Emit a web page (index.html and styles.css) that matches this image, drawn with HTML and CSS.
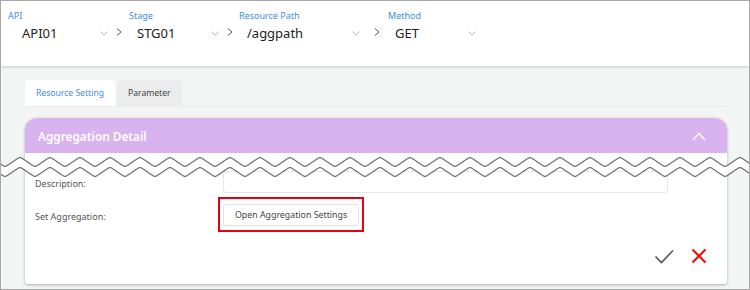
FILE: index.html
```html
<!DOCTYPE html>
<html lang="en">
<head>
<meta charset="utf-8">
<title>Aggregation Detail</title>
<link rel="stylesheet" href="styles.css">
</head>
<body>
<div class="frame">
  <header class="topbar">
    <div class="sel sel-api">
      <span class="sel-label">API</span>
      <div class="sel-row"><span class="sel-value">API01</span><svg class="caret" viewBox="0 0 8 5" width="8" height="5"><path d="M0.5 0.5 L4 4.2 L7.5 0.5"/></svg></div>
    </div>
    <svg class="sep sep-1" viewBox="0 0 6 8" width="6" height="8"><path d="M0.8 0.5 L5 4 L0.8 7.5"/></svg>
    <div class="sel sel-stage">
      <span class="sel-label">Stage</span>
      <div class="sel-row"><span class="sel-value">STG01</span><svg class="caret" viewBox="0 0 8 5" width="8" height="5"><path d="M0.5 0.5 L4 4.2 L7.5 0.5"/></svg></div>
    </div>
    <svg class="sep sep-2" viewBox="0 0 6 8" width="6" height="8"><path d="M0.8 0.5 L5 4 L0.8 7.5"/></svg>
    <div class="sel sel-path">
      <span class="sel-label">Resource Path</span>
      <div class="sel-row"><span class="sel-value">/aggpath</span><svg class="caret" viewBox="0 0 8 5" width="8" height="5"><path d="M0.5 0.5 L4 4.2 L7.5 0.5"/></svg></div>
    </div>
    <svg class="sep sep-3" viewBox="0 0 6 8" width="6" height="8"><path d="M0.8 0.5 L5 4 L0.8 7.5"/></svg>
    <div class="sel sel-method">
      <span class="sel-label">Method</span>
      <div class="sel-row"><span class="sel-value">GET</span><svg class="caret" viewBox="0 0 8 5" width="8" height="5"><path d="M0.5 0.5 L4 4.2 L7.5 0.5"/></svg></div>
    </div>
  </header>

  <main class="content">
    <nav class="tabs">
      <div class="tab tab-active">Resource Setting</div>
      <div class="tab">Parameter</div>
    </nav>

    <section class="card">
      <div class="card-head">
        <h2 class="card-title">Aggregation Detail</h2>
        <svg class="collapse" viewBox="0 0 14 9" width="14" height="9"><path d="M1 8 L7 1.5 L13 8"/></svg>
      </div>
      <div class="card-body">
        <div class="form">
          <span class="form-label">Description:</span>
          <div class="input"></div>
          <span class="form-label">Set Aggregation:</span>
          <div class="form-field">
            <span class="btn-wrap"><button class="btn" type="button">Open Aggregation Settings</button></span>
          </div>
        </div>
        <div class="actions">
          <svg class="icon-ok" viewBox="0 0 20 16" width="20" height="16"><path d="M1.5 8.5 L7.5 14.5 L19 2.5"/></svg>
          <svg class="icon-cancel" viewBox="0 0 16 16" width="16" height="16"><path d="M1.5 1.5 L14.5 14.5 M14.5 1.5 L1.5 14.5"/></svg>
        </div>
      </div>
    </section>
  </main>

  <svg class="tear" width="750" height="30" viewBox="0 0 750 30">
    <defs>
      <pattern id="zz" x="12.5" y="0" width="30" height="30" patternUnits="userSpaceOnUse">
        <path d="M0,11 L5.3,7.4 Q7.5,5.6 9.7,7.4 L20.3,14.6 Q22.5,16.4 24.7,14.6 L30,11 L30,21 L24.7,24.6 Q22.5,26.4 20.3,24.6 L9.7,17.4 Q7.5,15.6 5.3,17.4 L0,21 Z" fill="#fff"/>
        <path d="M-0.2,11.14 L5.3,7.4 Q7.5,5.6 9.7,7.4 L20.3,14.6 Q22.5,16.4 24.7,14.6 L30.2,10.86" fill="none" stroke="#2a2a2a" stroke-width="1"/>
        <path d="M-0.2,21.14 L5.3,17.4 Q7.5,15.6 9.7,17.4 L20.3,24.6 Q22.5,26.4 24.7,24.6 L30.2,20.86" fill="none" stroke="#2a2a2a" stroke-width="1"/>
      </pattern>
    </defs>
    <rect x="0" y="0" width="750" height="30" fill="url(#zz)"/>
  </svg>
</div>
</body>
</html>
```

FILE: styles.css
```css
* { box-sizing: border-box; }

html, body {
  margin: 0;
  padding: 0;
}

body {
  width: 750px;
  height: 290px;
  overflow: hidden;
  font-family: "Noto Sans", "Open Sans", sans-serif;
  color: #333;
}

.frame {
  position: relative;
  width: 750px;
  height: 290px;
  border: 1px solid #a8a8a8;
  background: #f3f4f4;
  overflow: hidden;
}

/* ---------- top bar ---------- */
.topbar {
  display: flex;
  align-items: flex-start;
  height: 65px;
  padding: 9px 0 0 7px;
  background: #fff;
  box-shadow: 0 1px 3px rgba(0, 0, 0, 0.18);
  position: relative;
  z-index: 1;
}

.sel {
  display: flex;
  flex-direction: column;
}

.sel-label {
  font-size: 9px;
  line-height: 12px;
  color: #3a8ee6;
}

.sel-row {
  display: flex;
  align-items: center;
  justify-content: space-between;
  height: 18px;
  margin-top: 2px;
}

.sel-value {
  font-size: 13px;
  line-height: 18px;
  color: #222;
}

.caret {
  fill: none;
  stroke: #b4b4b4;
  stroke-width: 1;
  margin-top: 1px;
}

.sel-api { width: 100px; }
.sel-api .sel-row { padding-left: 14px; }
.sel-stage { width: 90px; }
.sel-stage .sel-row { padding-left: 8px; }
.sel-path { width: 121px; }
.sel-path .sel-row { padding-left: 8px; }
.sel-method { width: 88px; }
.sel-method .sel-row { padding-left: 7px; }

.sep {
  flex: none;
  fill: none;
  stroke: #555;
  stroke-width: 1;
  margin-top: 18px;
}
.sep-1 { margin-left: 8px; margin-right: 7px; }
.sep-2 { margin-left: 8px; margin-right: 6px; }
.sep-3 { margin-left: 14px; margin-right: 8px; }

/* ---------- content ---------- */
.content {
  padding: 14px 22px 0 24px;
}

.tabs {
  display: flex;
  gap: 2px;
  height: 27px;
  border-bottom: 1px solid #e9eaea;
}

.tab {
  height: 26px;
  padding: 0 11px;
  display: flex;
  align-items: center;
  font-size: 8.6px;
  color: #444;
  background: #ececec;
  border-radius: 4px 4px 0 0;
}

.tab-active {
  background: #fff;
  color: #3f8cf0;
}

.card {
  margin-top: 11px;
  background: #fff;
  border-radius: 12px 12px 3px 3px;
  box-shadow: 0 1px 3px rgba(0, 0, 0, 0.3);
}

.card-head {
  height: 35px;
  display: flex;
  align-items: center;
  justify-content: space-between;
  padding: 0 21px 0 13px;
  background: #d8b3f0;
  border-radius: 12px 12px 0 0;
}

.card-title {
  margin: 0;
  font-size: 11.8px;
  font-weight: 600;
  color: #fff;
}

.collapse {
  fill: none;
  stroke: #fff;
  stroke-width: 1.4;
  margin-top: 1px;
}

.card-body {
  padding: 18px 0 20px 10px;
}

.form {
  display: grid;
  grid-template-columns: 188px 445px;
  row-gap: 11px;
  align-items: center;
}

.form-label {
  font-size: 9px;
  color: #555;
  padding-top: 2px;
}

.input {
  height: 22px;
  border: 1px solid #e6e6e6;
  border-radius: 3px;
  background: #fff;
}

.form-field {
  display: flex;
}

.btn-wrap {
  position: relative;
  display: inline-flex;
}

.btn-wrap::after {
  content: "";
  position: absolute;
  top: -7px;
  bottom: -6px;
  left: -5px;
  right: -5px;
  border: 2px solid #e60012;
}

.btn {
  height: 22px;
  padding: 0 11px;
  font-family: inherit;
  font-size: 8.8px;
  color: #444;
  background: #fff;
  border: 1px solid #e3e3e3;
  border-radius: 3px;
}

.actions {
  display: flex;
  justify-content: flex-end;
  align-items: flex-end;
  gap: 17px;
  margin-top: 22px;
  padding-right: 20px;
}

.icon-ok {
  fill: none;
  stroke: #555;
  stroke-width: 1.6;
}

.icon-cancel {
  fill: none;
  stroke: #ff0000;
  stroke-width: 2;
}

/* torn-page break drawn over the content */
.tear {
  position: absolute;
  left: -1px;
  top: 150px;
  z-index: 2;
}
```
